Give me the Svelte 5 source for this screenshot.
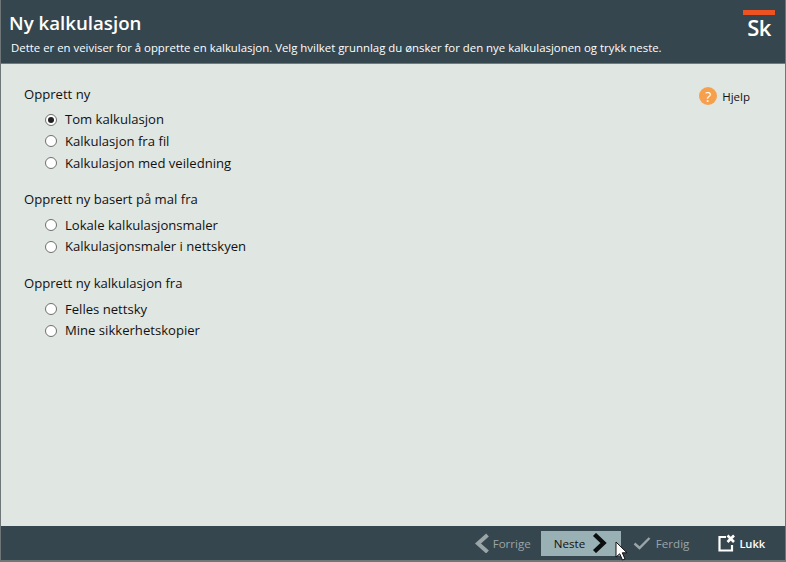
<script>
  const groups = [
    { title: 'Opprett ny', items: ['Tom kalkulasjon', 'Kalkulasjon fra fil', 'Kalkulasjon med veiledning'] },
    { title: 'Opprett ny basert på mal fra', items: ['Lokale kalkulasjonsmaler', 'Kalkulasjonsmaler i nettskyen'] },
    { title: 'Opprett ny kalkulasjon fra', items: ['Felles nettsky', 'Mine sikkerhetskopier'] }
  ];
  let selected = $state('Tom kalkulasjon');
</script>

<div class="window">
  <header class="head">
    <div class="head-text">
      <h1>Ny kalkulasjon</h1>
      <p>Dette er en veiviser for å opprette en kalkulasjon. Velg hvilket grunnlag du ønsker for den nye kalkulasjonen og trykk neste.</p>
    </div>
    <div class="logo"><span class="logo-bar"></span><span class="logo-text">Sk</span></div>
  </header>

  <main class="body">
    <div class="groups">
      {#each groups as g}
        <section class="group">
          <div class="group-title">{g.title}</div>
          <div class="options">
            {#each g.items as item}
              <button class="option" onclick={() => (selected = item)}>
                <span class="radio" class:on={selected === item}></span>
                <span>{item}</span>
              </button>
            {/each}
          </div>
        </section>
      {/each}
    </div>
    <div class="help">
      <span class="help-icon">?</span>
      <span>Hjelp</span>
    </div>
  </main>

  <footer class="foot">
    <div class="btn disabled">
      <svg width="16" height="20" viewBox="0 0 16 20"><path d="M13.500 2 4 10.500 13.500 19" fill="none" stroke="#9aa5a8" stroke-width="4"/></svg>
      <span>Forrige</span>
    </div>
    <div class="btn active">
      <span>Neste</span>
      <svg width="17" height="20" viewBox="0 0 17 20"><path d="M3.500 1.500 12.500 10 3.500 18.500" fill="none" stroke="#0c0f10" stroke-width="4.400"/></svg>
      <svg class="cursor" width="14" height="20" viewBox="0 0 14 20"><path d="M1 1V16L4.700 12.800 7.500 19 10 18 7.300 11.800H12Z" fill="#fff" stroke="#111" stroke-width="1"/></svg>
    </div>
    <div class="btn disabled ferdig">
      <svg width="18" height="14" viewBox="0 0 18 14"><path d="M1.500 7.500 6.500 12 16.500 2" fill="none" stroke="#9aa5a8" stroke-width="2.400"/></svg>
      <span>Ferdig</span>
    </div>
    <div class="btn lukk">
      <svg width="20" height="18" viewBox="0 0 20 18"><path d="M9 3H2.500V16.500H15V11" fill="none" stroke="#fff" stroke-width="2.200"/><path d="M10.500 1.500 17 8M17 1.500 10.500 8" fill="none" stroke="#fff" stroke-width="2.600"/></svg>
      <span>Lukk</span>
    </div>
  </footer>
</div>

<style>
  :global(body) { margin: 0; background: #fff; }
  .window {
    width: 786px;
    height: 562px;
    box-sizing: border-box;
    display: flex;
    flex-direction: column;
    border: 1px solid #6f7678;
    border-top: 0;
    border-bottom-width: 2px;
    font-family: "Open Sans", "Noto Sans", sans-serif;
    font-size: 13.100px;
    color: #111;
    background: #e0e6e2;
  }
  .head {
    height: 64px;
    box-sizing: border-box;
    flex: none;
    background: #36464e;
    border-bottom: 1px solid #717b7f;
    display: flex;
    justify-content: space-between;
    color: #fff;
  }
  .head-text { padding: 10px 0 0 8px; }
  h1 { margin: 0; font-size: 18.700px; font-weight: 600; line-height: 26px; }
  p { margin: 4px 0 0 2px; font-size: 11.400px; line-height: 16px; white-space: nowrap; }
  .logo { width: 32px; margin: 10px 10px 0 0; display: flex; flex-direction: column; }
  .logo-bar { height: 5px; background: #ee5122; }
  .logo-text { font-size: 22px; font-weight: 600; line-height: 24px; text-align: center; letter-spacing: -0.5px; }
  .body { flex: 1; display: flex; justify-content: space-between; padding: 21px 35px 0 23px; }
  .groups { display: flex; flex-direction: column; gap: 17.800px; }
  .group-title { line-height: 18px; }
  .options { display: flex; flex-direction: column; margin-top: 7.400px; gap: 2.600px; }
  .option {
    all: unset;
    display: flex;
    align-items: center;
    gap: 8px;
    padding-left: 21px;
    height: 19px;
    line-height: 19px;
  }
  .radio {
    width: 10px; height: 10px;
    border: 1px solid #6f6f6f;
    border-radius: 50%;
    background: #fff;
    display: flex;
    align-items: center;
    justify-content: center;
  }
  .radio.on::after { content: ''; width: 6px; height: 6px; border-radius: 50%; background: #222; }
  .help { display: flex; align-items: center; gap: 5px; height: 20px; margin-top: 1px; font-size: 11.500px; }
  .help-icon {
    width: 18px; height: 18px; border-radius: 50%;
    background: #f6a04d; color: #fff;
    font-weight: 400; font-size: 14px;
    display: flex; align-items: center; justify-content: center;
  }
  .foot {
    height: 34px;
    flex: none;
    box-sizing: border-box;
    background: #36464e;
    display: flex;
    align-items: center;
    justify-content: flex-end;
    padding-right: 20px;
    font-size: 11.600px;
  }
  .btn { display: flex; align-items: center; gap: 3px; height: 25px; color: #fff; }
  .btn.disabled { color: #9aa5a8; }
  .btn.active { background: #99b1b5; color: #111; width: 80px; box-sizing: border-box; padding-left: 13px; gap: 6px; margin-left: 10px; position: relative; }
  .cursor { position: absolute; left: 74px; top: 10px; }
  .ferdig { margin-left: 12px; gap: 5px; }
  .lukk { margin-left: 28px; font-weight: 600; gap: 2px; font-size: 11.200px; letter-spacing: -0.1px; }
</style>
